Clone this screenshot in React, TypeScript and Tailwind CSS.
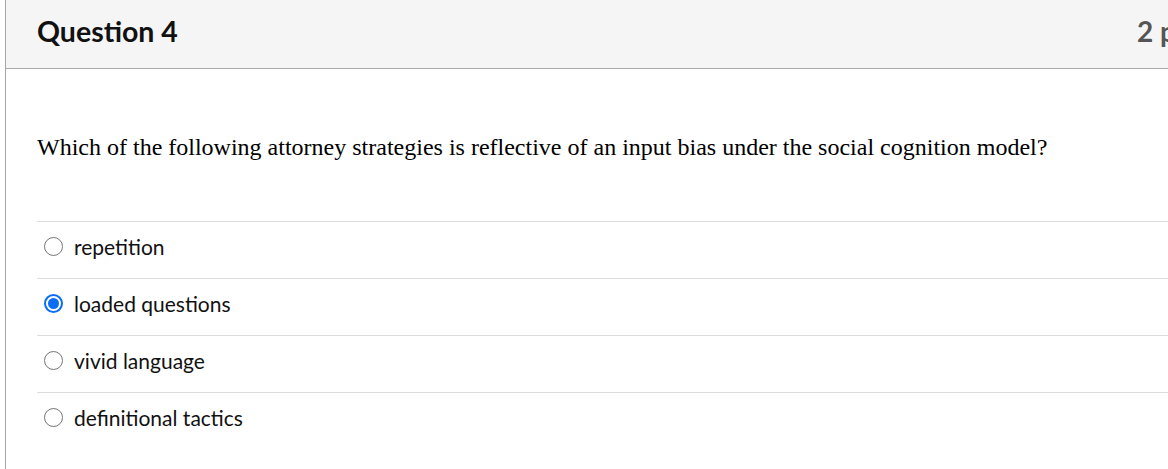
const ANSWERS = [
  { label: 'repetition', checked: false },
  { label: 'loaded questions', checked: true },
  { label: 'vivid language', checked: false },
  { label: 'definitional tactics', checked: false },
]

const Radio = ({ checked }: { checked: boolean }) => {
  if (checked)
    return (
      <span className="flex h-[19px] w-[19px] shrink-0 items-center justify-center rounded-full border-2 border-[#0b6cf5] bg-white">
        <span className="h-[11px] w-[11px] rounded-full bg-[#0b6cf5]" />
      </span>
    )
  return <span className="h-[19px] w-[19px] shrink-0 rounded-full border border-[#767676] bg-white" />
}

export default function App() {
  return (
    <div className="h-[469px] w-[1168px] overflow-hidden bg-white pl-[5px]">
      <div className="h-full border-l border-[#a5a5a5]">
        {/* Tiêu đề câu hỏi */}
        <div className="flex h-[69px] items-center whitespace-nowrap border-b border-[#a8a8a8] bg-[#f5f5f5] pb-[6px] pl-[31px] font-['Lato',sans-serif]">
          <h2 className="flex-1 text-[28.5px] font-bold leading-[34px] text-[#111]">Question 4</h2>
          <span className="w-[31px] overflow-hidden text-[28px] font-bold leading-[34px] text-[#555]">2 pts</span>
        </div>
        {/* Nội dung */}
        <div className="pl-[31px]">
          <p className="mt-[63px] font-['Liberation_Serif',serif] text-[24px] leading-[30px] text-black">
            Which of the following attorney strategies is reflective of an input bias under the social cognition model?
          </p>
          <div className="mt-[59px]">
            {ANSWERS.map((a) => (
              <div
                key={a.label}
                className="flex h-[57px] items-center gap-[11px] border-t border-[#dcdcdc] pb-[7px] pl-[7px] font-['Lato',sans-serif] text-[21px] text-[#111]"
              >
                <Radio checked={a.checked} />
                <span>{a.label}</span>
              </div>
            ))}
          </div>
        </div>
      </div>
    </div>
  )
}
